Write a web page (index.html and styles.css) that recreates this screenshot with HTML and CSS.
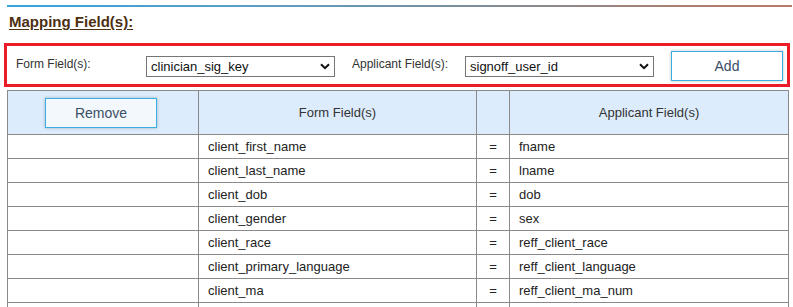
FILE: index.html
```html
<!DOCTYPE html>
<html>
<head>
<meta charset="utf-8">
<link rel="stylesheet" href="styles.css">
</head>
<body>
<div class="rule"></div>
<h2 class="title">Mapping Field(s):</h2>
<div class="mapbox">
  <label class="lbl lbl-form">Form Field(s):</label>
  <div class="sel">
    <select class="select"><option>clinician_sig_key</option></select>
    <svg class="chev" width="10" height="7" viewBox="0 0 10 7"><path d="M1 1.2 L5 5.2 L9 1.2" fill="none" stroke="#111" stroke-width="2"/></svg>
  </div>
  <label class="lbl lbl-app">Applicant Field(s):</label>
  <div class="sel">
    <select class="select"><option>signoff_user_id</option></select>
    <svg class="chev" width="10" height="7" viewBox="0 0 10 7"><path d="M1 1.2 L5 5.2 L9 1.2" fill="none" stroke="#111" stroke-width="2"/></svg>
  </div>
  <button class="btn btn-add">Add</button>
</div>
<table class="grid">
  <colgroup>
    <col class="c1"><col class="c2"><col class="c3"><col class="c4">
  </colgroup>
  <thead>
    <tr>
      <th><button class="btn btn-remove">Remove</button></th>
      <th>Form Field(s)</th>
      <th></th>
      <th>Applicant Field(s)</th>
    </tr>
  </thead>
  <tbody>
    <tr><td></td><td>client_first_name</td><td class="eq">=</td><td>fname</td></tr>
    <tr><td></td><td>client_last_name</td><td class="eq">=</td><td>lname</td></tr>
    <tr><td></td><td>client_dob</td><td class="eq">=</td><td>dob</td></tr>
    <tr><td></td><td>client_gender</td><td class="eq">=</td><td>sex</td></tr>
    <tr><td></td><td>client_race</td><td class="eq">=</td><td>reff_client_race</td></tr>
    <tr><td></td><td>client_primary_language</td><td class="eq">=</td><td>reff_client_language</td></tr>
    <tr><td></td><td>client_ma</td><td class="eq">=</td><td>reff_client_ma_num</td></tr>
    <tr><td></td><td></td><td class="eq"></td><td></td></tr>
  </tbody>
</table>
</body>
</html>
```
FILE: styles.css
```css
html, body {
  margin: 0;
  padding: 0;
  background: #ffffff;
  font-family: "Liberation Sans", Arial, sans-serif;
  color: #222;
}
.rule {
  margin: 5px 1px 0 7px;
  height: 2px;
  background: linear-gradient(to right, #36a6df 0%, #5f9cbf 35%, #7d8d99 60%, #a98073 85%, #b97a68 100%);
}
.title {
  margin: 0 0 12px 9px;
  padding-top: 6px;
  font-size: 15px;
  line-height: 18px;
  font-weight: bold;
  color: #4d2f12;
  text-decoration: underline;
  text-underline-offset: 2px;
}
.mapbox {
  margin-left: 4px;
  width: 786px;
  height: 44px;
  box-sizing: border-box;
  border: 3px solid #ea1c28;
  display: flex;
  align-items: center;
  padding: 0 4px 0 9px;
}
.lbl {
  font-size: 12px;
  color: #333;
  padding-bottom: 3px;
}
.lbl-form { width: 130px; }
.lbl-app { width: 113px; margin-left: 17px; }
.sel {
  position: relative;
  width: 189px;
  height: 21px;
  margin-top: 2px;
}
.select {
  appearance: none;
  -webkit-appearance: none;
  width: 100%;
  height: 100%;
  box-sizing: border-box;
  border: 1px solid #767676;
  border-radius: 0;
  background: #fff;
  font-family: "Liberation Sans", Arial, sans-serif;
  font-size: 13px;
  color: #111;
  padding: 0 0 0 4px;
  margin: 0;
}
.chev {
  position: absolute;
  right: 5px;
  top: 7px;
  pointer-events: none;
}
.btn {
  width: 112px;
  height: 30px;
  box-sizing: border-box;
  border: 1px solid #3aaee2;
  box-shadow: 0 0 3px rgba(0, 0, 0, 0.25);
  font-family: "Liberation Sans", Arial, sans-serif;
  font-size: 14px;
  color: #3a4e66;
  padding: 0;
  border-radius: 0;
}
.btn-add {
  margin-left: 17px;
  margin-top: 2px;
  background: #ffffff;
}
.btn-remove {
  background: #f3f8fd;
  display: block;
  margin: 0 0 0 37px;
}
.grid {
  margin: 3px 0 0 7px;
  width: 781px;
  border-collapse: collapse;
  table-layout: fixed;
  font-size: 13px;
}
.c1 { width: 191px; }
.c2 { width: 278px; }
.c3 { width: 33px; }
.c4 { width: 279px; }
.grid th, .grid td {
  border: 1px solid #8a8a8a;
  padding: 0;
}
.grid th {
  background: #dcecfc;
  height: 43px;
  font-weight: normal;
  color: #333;
  text-align: center;
}
.grid td {
  height: 23px;
  padding-left: 9px;
  color: #222;
  white-space: nowrap;
}
.grid td.eq {
  padding-left: 0;
  text-align: center;
}
```
